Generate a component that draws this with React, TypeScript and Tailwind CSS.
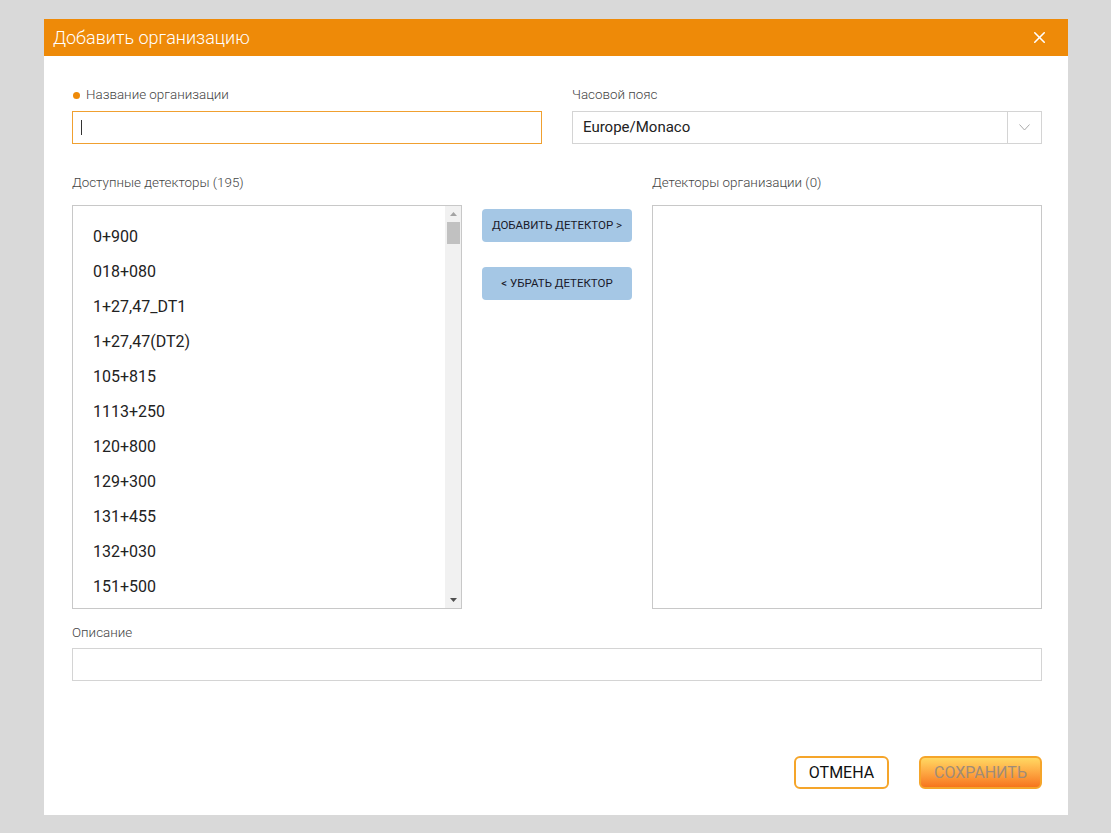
import { X } from "lucide-react";

const detectors = [
  "0+900",
  "018+080",
  "1+27,47_DT1",
  "1+27,47(DT2)",
  "105+815",
  "1113+250",
  "120+800",
  "129+300",
  "131+455",
  "132+030",
  "151+500",
];

function Label({ children, required }: { children: React.ReactNode; required?: boolean }) {
  return (
    <div className="flex items-center h-4 text-[13.4px] leading-4 font-light text-[#444]">
      {required && <span className="w-[7px] h-[7px] rounded-full bg-[#ee8a08] ml-[1px] mr-[6px]" />}
      {children}
    </div>
  );
}

export default function App() {
  return (
    <div
      className="min-h-[833px] bg-[#d9d9d9] pt-[19px] pl-[44px]"
      style={{ fontFamily: "Roboto, 'Liberation Sans', sans-serif" }}
    >
      <div className="w-[1024px] h-[796px] bg-white flex flex-col">
        <header className="h-[37px] bg-[#ee8a08] flex items-center justify-between pl-[9px] pr-[19px]">
          <span className="text-white text-[18px] font-light">Добавить организацию</span>
          <X size={19} color="#fff" strokeWidth={2} />
        </header>

        <div className="flex-1 flex flex-col pl-[28px] pr-[26px] pt-[31px] pb-[26px]">
          <div className="flex gap-[30px]">
            <div className="w-[470px]">
              <Label required>Название организации</Label>
              <div className="mt-2 h-[33px] border border-[#f0a030] flex items-center pl-2">
                <span className="w-px h-[15px] bg-[#333]" />
              </div>
            </div>
            <div className="w-[470px]">
              <Label>Часовой пояс</Label>
              <div className="mt-2 h-[33px] border border-[#d4d4d4] flex">
                <div className="flex-1 flex items-center pl-[10px] text-[15px] text-[#222]">
                  Europe/Monaco
                </div>
                <div className="w-[34px] border-l border-[#d4d4d4] flex items-center justify-center">
                  <svg width="11" height="7" viewBox="0 0 11 7">
                    <path d="M0.5 0.5 L5.5 6 L10.5 0.5" fill="none" stroke="#aaa" strokeWidth="1" />
                  </svg>
                </div>
              </div>
            </div>
          </div>

          <div className="flex mt-[31px]">
            <div className="w-[390px]">
              <Label>Доступные детекторы (195)</Label>
              <div className="mt-[14px] h-[404px] border border-[#c8c8c8] flex overflow-hidden">
                <ul className="flex-1 pt-[13px] pl-5 overflow-hidden">
                  {detectors.map((d) => (
                    <li key={d} className="h-[35px] flex items-center text-[16px] text-[#222]">
                      {d}
                    </li>
                  ))}
                </ul>
                <div className="w-4 bg-[#f1f1f1] flex flex-col items-center">
                  <div className="h-4 flex items-center justify-center">
                    <svg width="7" height="4" viewBox="0 0 7 4">
                      <path d="M0 4 L3.5 0 L7 4 Z" fill="#a3a3a3" />
                    </svg>
                  </div>
                  <div className="w-[13px] h-[22px] bg-[#c1c1c1]" />
                  <div className="flex-1" />
                  <div className="h-4 flex items-center justify-center">
                    <svg width="7" height="4" viewBox="0 0 7 4">
                      <path d="M0 0 L3.5 4 L7 0 Z" fill="#505050" />
                    </svg>
                  </div>
                </div>
              </div>
            </div>

            <div className="w-[150px] mx-5 pt-[34px] flex flex-col gap-[25px]">
              <button className="h-[33px] rounded bg-[#a5c7e5] text-[11.5px] text-[#1a1a2a] uppercase">
                Добавить детектор &gt;
              </button>
              <button className="h-[33px] rounded bg-[#a5c7e5] text-[11.5px] text-[#1a1a2a] uppercase">
                &lt; Убрать детектор
              </button>
            </div>

            <div className="w-[390px]">
              <Label>Детекторы организации (0)</Label>
              <div className="mt-[14px] h-[404px] border border-[#c8c8c8]" />
            </div>
          </div>

          <div className="mt-4">
            <Label>Описание</Label>
            <div className="mt-[7px] h-[33px] border border-[#d4d4d4]" />
          </div>

          <footer className="mt-auto flex justify-end gap-[30px]">
            <button className="h-[33px] w-[95px] rounded-md border-2 border-[#f5a52a] bg-white text-[16px] text-[#111]">
              ОТМЕНА
            </button>
            <button className="h-[33px] w-[123px] rounded-md border-2 border-[#f5a52a] bg-gradient-to-b from-[#ffd862] to-[#f6741c] text-[16px] text-[#a08c78]">
              СОХРАНИТЬ
            </button>
          </footer>
        </div>
      </div>
    </div>
  );
}
